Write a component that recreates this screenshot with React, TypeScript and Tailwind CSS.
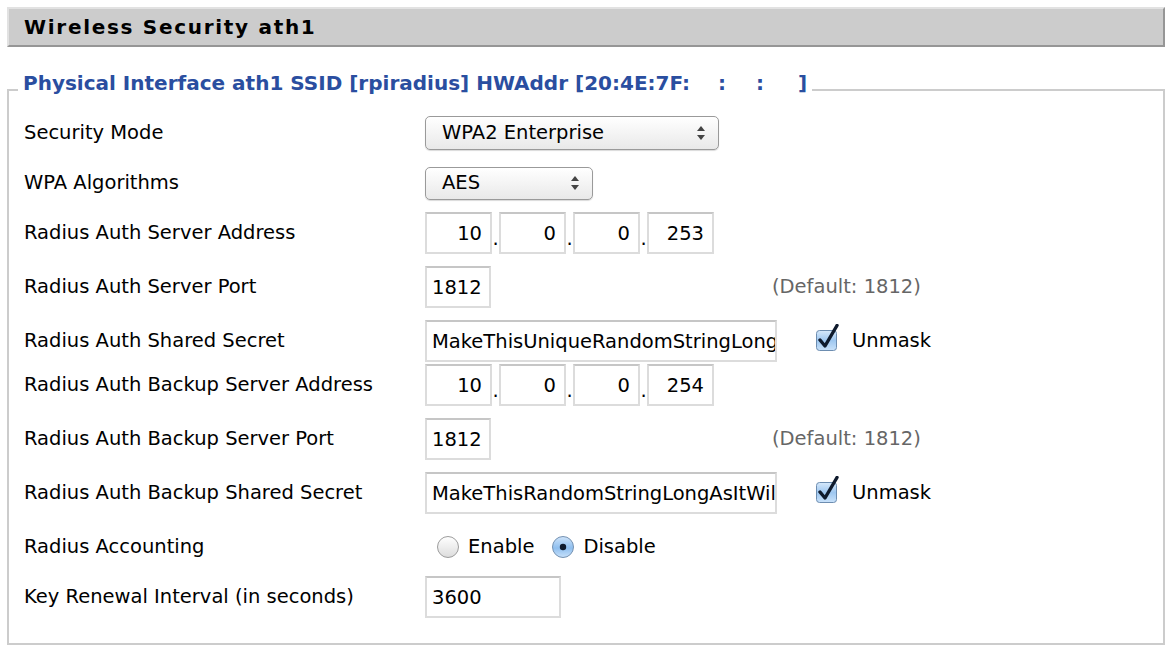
import React from "react";

const LABEL_FONT = { fontFamily: '"DejaVu Sans", Verdana, sans-serif' };

function Row({ h, label, children }: { h: string; label: string; children?: React.ReactNode }) {
  return (
    <div className={`flex items-center ${h}`}>
      <div className="w-[401px] shrink-0 text-[19.5px] text-black">{label}</div>
      <div className="flex items-center">{children}</div>
    </div>
  );
}

function TextBox({ value, w, right }: { value: string; w: string; right?: boolean }) {
  return (
    <div
      className={`${w} h-[42px] flex items-center overflow-hidden whitespace-nowrap border-2 border-[#dcdcdc] border-t-[#c6c6c6] bg-white pt-[2px] text-[19.5px] text-black ${
        right ? "justify-end pr-[8px]" : "pl-[5px]"
      }`}
    >
      {value}
    </div>
  );
}

function IpBox({ parts }: { parts: string[] }) {
  return (
    <div className="flex items-center">
      {parts.map((p, i) => (
        <React.Fragment key={i}>
          {i > 0 && <span className="w-[7px] text-[19.5px] self-end pb-[6px] text-center leading-none">.</span>}
          <TextBox value={p} w="w-[67px]" right />
        </React.Fragment>
      ))}
    </div>
  );
}

function Select({ value, w, h }: { value: string; w: string; h: string }) {
  return (
    <div
      className={`${w} ${h} flex items-center justify-between rounded-[5px] border border-[#9a9a9a] bg-gradient-to-b from-white to-[#e9e9e9] pl-[16px] pr-[12px] text-[19.5px] text-black shadow-[0_1px_1px_rgba(0,0,0,0.15)]`}
    >
      <span>{value}</span>
      <svg width="10" height="16" viewBox="0 0 10 16">
        <path d="M5 1 L9 6 L1 6 Z" fill="#444" />
        <path d="M5 15 L9 10 L1 10 Z" fill="#444" />
      </svg>
    </div>
  );
}

function Checkbox() {
  return (
    <svg width="26" height="28" viewBox="0 0 26 28">
      <defs>
        <linearGradient id="cb" x1="0" y1="0" x2="0" y2="1">
          <stop offset="0" stopColor="#d7e9fb" />
          <stop offset="0.5" stopColor="#9ec7f0" />
          <stop offset="1" stopColor="#c9e2fa" />
        </linearGradient>
      </defs>
      <rect x="1.5" y="6.5" width="20" height="20" rx="3" fill="url(#cb)" stroke="#6d8db0" />
      <path d="M5 16 L10 22 L22 1.5" fill="none" stroke="#0f1b2d" strokeWidth="3.4" strokeLinecap="round" strokeLinejoin="round" />
    </svg>
  );
}

function Radio({ on }: { on?: boolean }) {
  return (
    <svg width="24" height="24" viewBox="0 0 24 24">
      <defs>
        <linearGradient id="rOff" x1="0" y1="0" x2="0" y2="1">
          <stop offset="0" stopColor="#ffffff" />
          <stop offset="1" stopColor="#dcdcdc" />
        </linearGradient>
        <linearGradient id="rOn" x1="0" y1="0" x2="0" y2="1">
          <stop offset="0" stopColor="#cfe4fa" />
          <stop offset="0.55" stopColor="#8fbfef" />
          <stop offset="1" stopColor="#c8e1fa" />
        </linearGradient>
      </defs>
      <circle cx="12" cy="12" r="10.5" fill={on ? "url(#rOn)" : "url(#rOff)"} stroke={on ? "#7592b2" : "#9d9d9d"} />
      {on && <circle cx="12" cy="12" r="3.2" fill="#0f1b2d" />}
    </svg>
  );
}

export default function App() {
  return (
    <div className="w-[1176px] h-[654px] bg-white px-[7px] pt-[7px]" style={LABEL_FONT}>
      <div className="w-[1158px] h-[40px] flex items-center border-t-2 border-l-2 border-t-[#e2e2e2] border-l-[#e2e2e2] border-b-2 border-r-2 border-b-[#969696] border-r-[#969696] bg-[#cccccc] pl-[15px]">
        <h1 className="text-[20px] font-bold tracking-[1.7px] text-black">Wireless Security ath1</h1>
      </div>

      <fieldset className="mt-[24px] h-[574px] w-[1158px] border-2 border-[#cccccc] px-[15px] pt-0 pb-0">
        <legend className="ml-[-6px] px-[5px] pb-[14px] text-[20px] font-bold leading-[24px] text-[#2a4ea0] whitespace-pre">
          Physical Interface ath1 SSID [rpiradius] HWAddr [20:4E:7F:<span className="inline-block w-[28px]" />:<span className="inline-block w-[30px]" />:<span className="inline-block w-[34px]" />]
        </legend>

        <div className="mt-[-1px]">
          <Row h="h-[50px]" label="Security Mode">
            <Select value="WPA2 Enterprise" w="w-[294px]" h="h-[34px]" />
          </Row>
          <Row h="h-[50px]" label="WPA Algorithms">
            <Select value="AES" w="w-[168px]" h="h-[33px]" />
          </Row>
          <Row h="h-[50px]" label="Radius Auth Server Address">
            <IpBox parts={["10", "0", "0", "253"]} />
          </Row>
          <Row h="h-[58px]" label="Radius Auth Server Port">
            <TextBox value="1812" w="w-[66px]" />
            <span className="ml-[281px] text-[19.5px] text-[#666]">(Default: 1812)</span>
          </Row>
          <Row h="h-[50px]" label="Radius Auth Shared Secret">
            <TextBox value="MakeThisUniqueRandomStringLong" w="w-[352px]" />
            <span className="ml-[38px] mt-[-6px]">
              <Checkbox />
            </span>
            <span className="ml-[11px] text-[19.5px]">Unmask</span>
          </Row>
          <Row h="h-[38px]" label="Radius Auth Backup Server Address">
            <IpBox parts={["10", "0", "0", "254"]} />
          </Row>
          <Row h="h-[70px]" label="Radius Auth Backup Server Port">
            <TextBox value="1812" w="w-[66px]" />
            <span className="ml-[281px] text-[19.5px] text-[#666]">(Default: 1812)</span>
          </Row>
          <Row h="h-[38px]" label="Radius Auth Backup Shared Secret">
            <TextBox value="MakeThisRandomStringLongAsItWil" w="w-[352px]" />
            <span className="ml-[38px] mt-[-6px]">
              <Checkbox />
            </span>
            <span className="ml-[11px] text-[19.5px]">Unmask</span>
          </Row>
          <Row h="h-[70px]" label="Radius Accounting">
            <span className="ml-[11px] flex">
              <Radio />
            </span>
            <span className="ml-[8px] text-[19.5px]">Enable</span>
            <span className="ml-[17px] flex">
              <Radio on />
            </span>
            <span className="ml-[8px] text-[19.5px]">Disable</span>
          </Row>
          <Row h="h-[30px]" label="Key Renewal Interval (in seconds)">
            <TextBox value="3600" w="w-[136px]" />
          </Row>
        </div>
      </fieldset>
    </div>
  );
}
